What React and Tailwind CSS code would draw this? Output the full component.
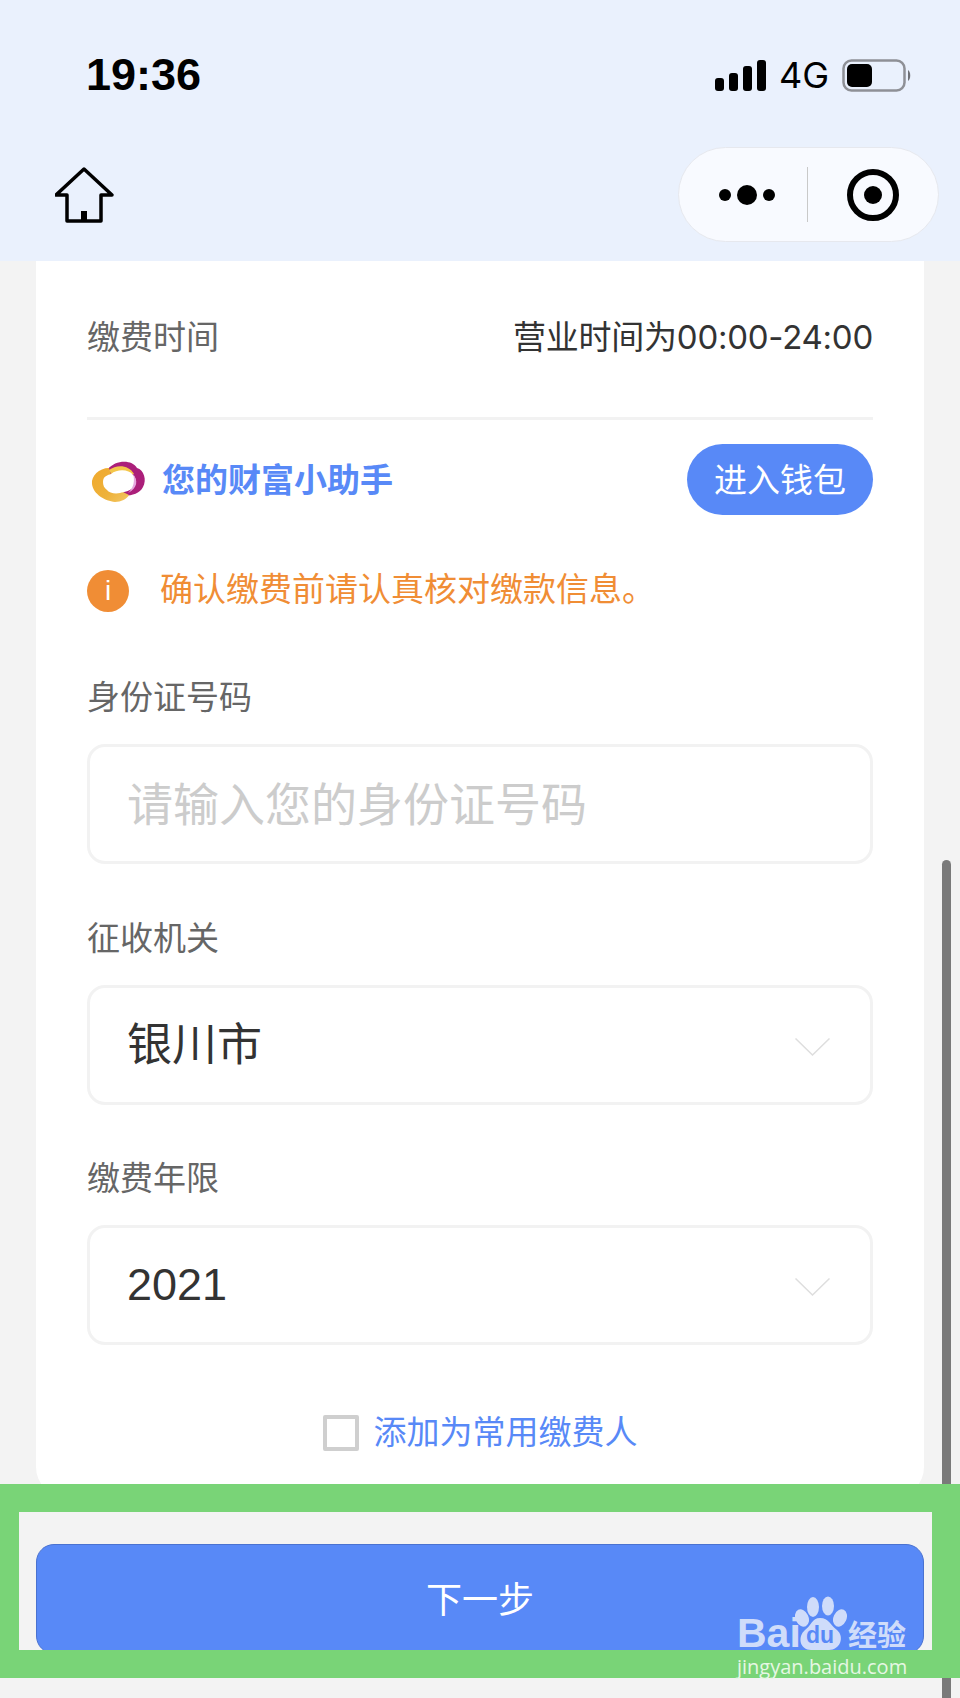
import React from "react";

const FONT = "font-['Liberation_Sans','Noto_Sans_CJK_SC',sans-serif]";

const HomeIcon = () => (
  <svg width="60" height="58" viewBox="0 0 60 58" className="block">
    <path
      d="M29 4 L1 30 H12 V56 H46 V30 H57 Z"
      fill="none"
      stroke="#000"
      strokeWidth="3.5"
      strokeLinejoin="round"
    />
    <rect x="26" y="46" width="6" height="10" fill="#000" />
  </svg>
);

const SignalIcon = () => (
  <svg width="51" height="31" viewBox="0 0 51 31" className="block">
    <rect x="0" y="18" width="9" height="13" rx="3" fill="#000" />
    <rect x="14" y="13" width="9" height="18" rx="3" fill="#000" />
    <rect x="28" y="6" width="9" height="25" rx="3" fill="#000" />
    <rect x="42" y="0" width="9" height="31" rx="3" fill="#000" />
  </svg>
);

const BatteryIcon = () => (
  <svg width="70" height="33" viewBox="0 0 70 33" className="block">
    <rect x="1.5" y="1.5" width="61" height="30" rx="8" fill="none" stroke="#8e9096" strokeWidth="2.5" />
    <rect x="5" y="5" width="25" height="23" rx="5" fill="#000" />
    <path d="M66 11 C69 13 69 20 66 22 Z" fill="#6e7076" />
  </svg>
);

const CloudLogo = () => (
  <svg width="70" height="60" viewBox="0 0 70 60" className="block">
    <defs>
      <linearGradient id="cloudY" x1="0" y1="0" x2="1" y2="1">
        <stop offset="0" stopColor="#f0a92e" />
        <stop offset="0.6" stopColor="#eeb23a" />
        <stop offset="1" stopColor="#f3c765" />
      </linearGradient>
    </defs>
    <path
      d="M23 19 C30 10 47 9 52 18 C59 20 62 30 58 37 C54 45 42 47 33 45 Z"
      fill="#ab1f7a"
    />
    <path
      d="M24 18 C14 18 6 26 7 34 C8 44 20 51 30 52 C36 52 42 49 44 45 L30 38 Z"
      fill="url(#cloudY)"
    />
    <path d="M24 20 C32 14 44 15 49 24 L30 30 Z" fill="#f4c64a" />
    <path
      d="M18 32 C18 26 23 25 26 24 C32 19 44 19 48 25 C51 28 52 33 49 37 C45 41 39 42 35 43 C30 44 24 43 22 40 C19 38 18 35 18 32 Z"
      fill="#fff"
    />
    <path d="M48 24 C53 30 53 38 43 43 C49 38 50 30 48 24 Z" fill="#e6a6df" />
  </svg>
);

const Chevron = () => (
  <svg width="35" height="18" viewBox="0 0 35 18" className="block mt-[4px]">
    <path d="M0.5 0.5 L17.5 17 L34.5 0.5" fill="none" stroke="#dedede" strokeWidth="1.5" />
  </svg>
);

const Field = ({ label, children, className }) => (
  <div className={className}>
    <div className="h-[46px] leading-[48px] text-[33px] text-[#666]">{label}</div>
    <div className="mt-[24px] h-[120px] rounded-[18px] border-[3px] border-[#f2f2f2] pl-[37px] pr-[40px] flex items-center justify-between">
      {children}
    </div>
  </div>
);

export default function App() {
  return (
    <div className={`relative w-[960px] h-[1698px] overflow-hidden bg-[#f3f3f3] ${FONT}`}>
      {/* top bar */}
      <div className="h-[261px] bg-[#eaf1fd]">
        <div className="flex items-center justify-between pl-[86px] pr-[48px] pt-[3px] h-[147px]">
          <span className="text-[45px] leading-[50px] font-bold text-black">19:36</span>
          <div className="flex items-center">
            <SignalIcon />
            <span className="ml-[13px] text-[36px] leading-[34px] text-black font-['Inter',sans-serif]">4G</span>
            <div className="ml-[13px]">
              <BatteryIcon />
            </div>
          </div>
        </div>
        <div className="flex items-start justify-between pl-[55px] pr-[21px]">
          <div className="pt-[18px]">
            <HomeIcon />
          </div>
          <div className="w-[261px] h-[95px] rounded-full bg-[#f8faff] border border-[#e6e8ee] flex items-center">
            <div className="flex-1 flex items-center justify-center gap-[6px] pl-[7px]">
              <span className="w-[12px] h-[12px] rounded-full bg-black" />
              <span className="w-[20px] h-[20px] rounded-full bg-black" />
              <span className="w-[12px] h-[12px] rounded-full bg-black" />
            </div>
            <div className="w-px h-[55px] bg-[#c9c9c9]" />
            <div className="w-[130px] flex items-center justify-center">
              <div className="w-[52px] h-[52px] rounded-full border-[6px] border-black flex items-center justify-center">
                <span className="w-[18px] h-[18px] rounded-full bg-black" />
              </div>
            </div>
          </div>
        </div>
      </div>

      {/* card */}
      <div className="ml-[36px] w-[888px] bg-white rounded-b-[30px] px-[51px] pb-[46px]">
        <div className="h-[159px] pb-[2px] border-b-[3px] border-[#f2f2f2] flex items-center justify-between text-[33px]">
          <span className="text-[#666]">缴费时间</span>
          <span className="text-[#333] tracking-[-0.25px] font-['Inter','Noto_Sans_CJK_SC',sans-serif]">营业时间为00:00-24:00</span>
        </div>

        <div className="mt-[24px] h-[71px] flex items-center justify-between">
          <div className="flex items-center">
            <div className="-ml-[2px]">
              <CloudLogo />
            </div>
            <span className="ml-[7px] mt-[2px] text-[33px] font-bold text-[#5889f7]">您的财富小助手</span>
          </div>
          <div className="w-[186px] h-[71px] pt-[2px] rounded-full bg-[#5889f7] text-white text-[33px] flex items-center justify-center">
            进入钱包
          </div>
        </div>

        <div className="mt-[55px] h-[42px] flex items-center">
          <div className="w-[42px] h-[42px] rounded-full bg-[#f08d35] text-white text-[28px] flex items-center justify-center">
            i
          </div>
          <span className="ml-[31px] pb-[2px] text-[33px] text-[#f08d35]">确认缴费前请认真核对缴款信息。</span>
        </div>

        <Field label="身份证号码" className="mt-[62px]">
          <span className="pt-[3px] text-[46px] text-[#cccccc]">请输入您的身份证号码</span>
        </Field>

        <Field label="征收机关" className="mt-[51px]">
          <span className="pt-[2px] text-[45px] text-[#333]">银川市</span>
          <Chevron />
        </Field>

        <Field label="缴费年限" className="mt-[50px]">
          <span className="text-[45px] text-[#333]">2021</span>
          <Chevron />
        </Field>

        <div className="mt-[70px] h-[36px] flex items-center justify-center">
          <div className="w-[36px] h-[36px] rounded-[2px] border-[4px] border-[#cfcfcf]" />
          <span className="ml-[15px] text-[33px] text-[#5889f7]">添加为常用缴费人</span>
        </div>
      </div>

      {/* next button */}
      <div className="mt-[47px] ml-[36px] w-[888px] h-[110px] pt-[4px] rounded-[18px] bg-[#5889f7] border border-[#4a72d0] flex items-center justify-center text-white text-[36px]">
        下一步
      </div>

      {/* scrollbar */}
      <div className="absolute left-[942px] top-[860px] bottom-0 w-[9px] rounded-t-full bg-[#7a7a7a]" />

      {/* green highlight frame */}
      <div className="absolute left-0 top-[1484px] w-[960px] h-[194px] border-t-[28px] border-b-[28px] border-l-[19px] border-r-[28px] border-[#79d477]" />

      {/* watermark */}
      <div className="absolute left-[737px] top-[1596px] w-[172px] text-[#cfdcfa]">
        <div className="relative h-[54px]">
          <span className="absolute left-0 bottom-[-6px] text-[41px] leading-[46px] font-bold font-['Liberation_Sans',sans-serif]">
            Bai
          </span>
          <svg width="52" height="54" viewBox="0 0 52 54" className="absolute left-[58px] top-0">
            <ellipse cx="7" cy="22" rx="6.5" ry="9" fill="#cfdcfa" transform="rotate(-25 7 22)" />
            <ellipse cx="18" cy="11" rx="6" ry="10" fill="#cfdcfa" />
            <ellipse cx="33" cy="10" rx="6" ry="9.5" fill="#cfdcfa" />
            <ellipse cx="45" cy="22" rx="6.5" ry="9" fill="#cfdcfa" transform="rotate(25 45 22)" />
            <path d="M25 22 C34 22 36 30 42 34 C50 41 45 54 34 54 H16 C5 54 2 41 10 34 C16 30 17 22 25 22 Z" fill="#cfdcfa" />
            <text x="25" y="47" textAnchor="middle" fontSize="23" fontWeight="700" fill="#5889f7" fontFamily="Liberation Sans">
              du
            </text>
          </svg>
          <span className="absolute left-[111px] bottom-[-3px] text-[29px] leading-[34px] font-bold">经验</span>
        </div>
        <div className="mt-[4px] text-[20px] leading-[26px] whitespace-nowrap text-[#e6f7e4] font-['Open_Sans',sans-serif]">
          jingyan.baidu.com
        </div>
      </div>
    </div>
  );
}
